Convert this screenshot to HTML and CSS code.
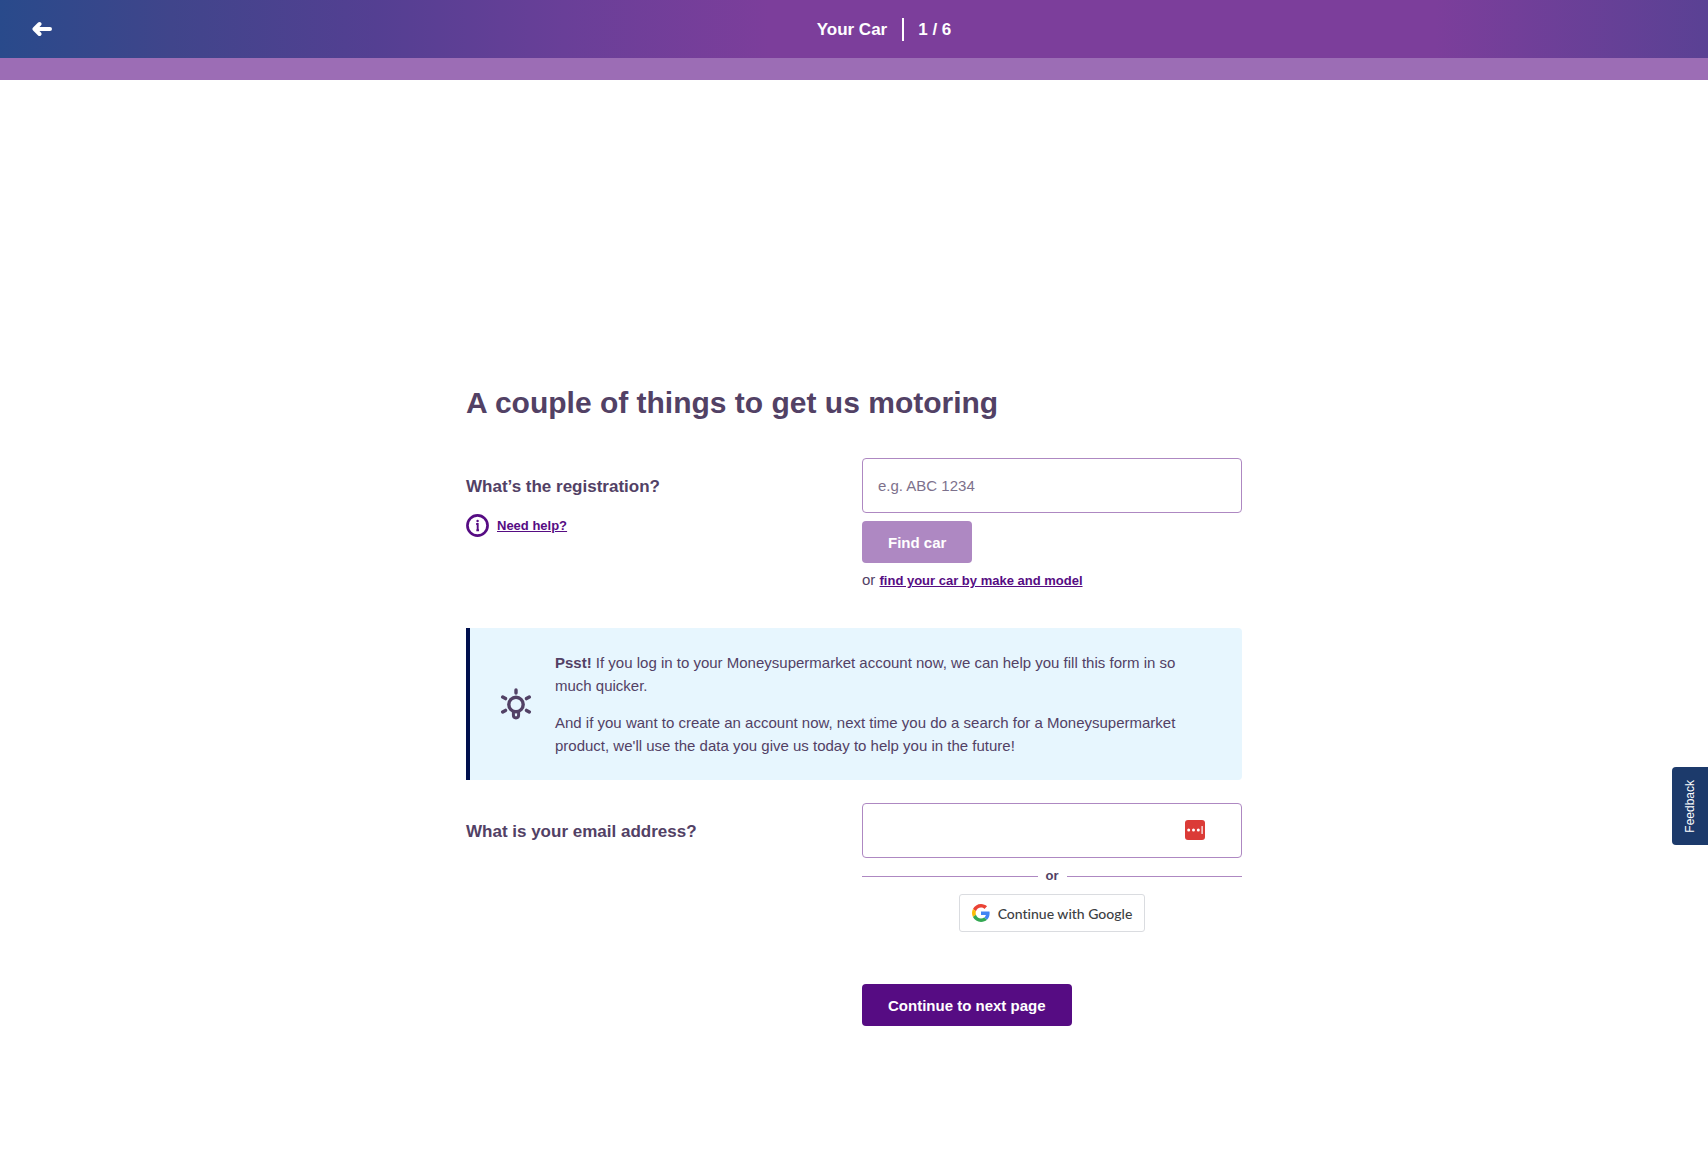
FILE: index.html
```html
<!DOCTYPE html>
<html lang="en">
<head>
<meta charset="utf-8">
<meta name="viewport" content="width=device-width, initial-scale=1">
<title>Your Car</title>
<link rel="stylesheet" href="styles.css">
</head>
<body>
<header class="header">
  <button class="back" type="button" aria-label="Back">
    <svg width="20" height="16" viewBox="0 0 20 16" fill="none" stroke="currentColor" stroke-width="4" stroke-linecap="round" stroke-linejoin="round"><path d="M7.500 3 2.500 8l5 5M3 8h15"/></svg>
  </button>
  <div class="step">
    <span class="step-name">Your Car</span>
    <span class="step-count">1 / 6</span>
  </div>
</header>
<div class="progress"></div>

<main class="main">
  <h1 class="title">A couple of things to get us motoring</h1>
  <form class="form">
    <div class="row">
      <div class="question">
        <label class="label" for="registration">What’s the registration?</label>
        <div class="help">
          <svg width="23" height="23" viewBox="0 0 24 24" fill="none" stroke="currentColor"><circle cx="12" cy="12" r="10.500" stroke-width="2.800"/><path d="M10.600 10.500h1.600V17.500M10.800 17h2.800" stroke-width="2"/><circle cx="12.100" cy="7.400" r="1.300" fill="currentColor" stroke="none"/></svg>
          <a class="link" href="#">Need help?</a>
        </div>
      </div>
      <div class="answer">
        <input class="input" id="registration" type="text" placeholder="e.g. ABC 1234">
        <button class="button button-muted" type="button">Find car</button>
        <p class="alternative">or <a class="link" href="#">find your car by make and model</a></p>
      </div>
    </div>

    <aside class="notice">
      <svg class="bulb" width="32" height="32" viewBox="0 0 32 32" fill="none" stroke="currentColor" stroke-width="3.400" stroke-linecap="round"><circle cx="16" cy="16.500" r="7.200"/><path d="M16 2v3M2.700 9l2.800 1.600M29.300 9l-2.800 1.600M2.700 24l2.800-1.600M29.300 24l-2.800-1.600"/><path d="M13.400 23.500v3.800a2.600 2.600 0 0 0 5.200 0v-3.800z" stroke-width="3"/></svg>
      <div class="notice-text">
        <p><strong>Psst!</strong> If you log in to your Moneysupermarket account now, we can help you fill this form in so much quicker.</p>
        <p>And if you want to create an account now, next time you do a search for a Moneysupermarket product, we'll use the data you give us today to help you in the future!</p>
      </div>
    </aside>

    <div class="row">
      <div class="question">
        <label class="label" for="email">What is your email address?</label>
      </div>
      <div class="answer">
        <div class="field">
          <input class="input" id="email" type="email">
          <svg class="vault" width="20" height="20" viewBox="0 0 20 20"><rect width="20" height="20" rx="3" fill="#db3b37"/><g fill="#fff"><circle cx="3.700" cy="10" r="1.500"/><circle cx="8.500" cy="10" r="1.500"/><circle cx="13.300" cy="10" r="1.500"/><rect x="16.500" y="6" width="1.200" height="8" rx=".6"/></g></svg>
        </div>
        <div class="divider">or</div>
        <button class="google" type="button">
          <svg width="18" height="18" viewBox="0 0 48 48"><path fill="#ea4335" d="M24 9.500c3.540 0 6.710 1.220 9.210 3.600l6.850-6.850C35.900 2.380 30.470 0 24 0 14.620 0 6.510 5.380 2.560 13.220l7.980 6.190C12.430 13.720 17.740 9.500 24 9.500z"/><path fill="#4285f4" d="M46.980 24.550c0-1.570-.15-3.090-.38-4.550H24v9.020h12.940c-.58 2.960-2.260 5.480-4.780 7.180l7.730 6c4.510-4.180 7.090-10.360 7.090-17.650z"/><path fill="#fbbc05" d="M10.530 28.590c-.48-1.450-.76-2.990-.76-4.590s.27-3.140.76-4.590l-7.980-6.190C.92 16.460 0 20.120 0 24c0 3.880.92 7.540 2.560 10.780l7.970-6.190z"/><path fill="#34a853" d="M24 48c6.480 0 11.930-2.130 15.890-5.810l-7.730-6c-2.150 1.450-4.920 2.300-8.160 2.300-6.260 0-11.570-4.220-13.470-9.910l-7.980 6.190C6.510 42.620 14.620 48 24 48z"/></svg>
          Continue with Google
        </button>
      </div>
    </div>

    <div class="row row-submit">
      <div class="answer">
        <button class="button" type="submit">Continue to next page</button>
      </div>
    </div>
  </form>
</main>

<button class="feedback" type="button">Feedback</button>
</body>
</html>
```
FILE: styles.css
```css
* {
  box-sizing: border-box;
}

body {
  margin: 0;
  background: #fff;
  color: #524165;
  font-family: "Liberation Sans", Arial, sans-serif;
  font-size: 15px;
  line-height: 23px;
}

button,
input {
  font: inherit;
}

h1,
p {
  margin: 0;
}

.header {
  display: flex;
  align-items: center;
  height: 58px;
  padding-left: 32px;
  background: linear-gradient(90deg, #294a8b 0%, #40458b 10%, #543f92 22%, #693f98 33%, #7c3e9b 45%, #7c3e9b 84%, #5a4194 100%);
  color: #fff;
}

.back {
  display: flex;
  width: 28px;
  padding: 0;
  border: 0;
  background: none;
  color: inherit;
}

.step {
  display: flex;
  flex: 1;
  justify-content: center;
  font-size: 17px;
  font-weight: 700;
}

.step-count {
  margin-left: 15px;
  padding-left: 14px;
  border-left: 2px solid #fff;
}

.progress {
  height: 22px;
  background: #9c6db5;
}

.main {
  max-width: 808px;
  margin: 0 auto;
  padding: 303px 16px 140px;
}

.title {
  margin-bottom: 35px;
  font-size: 30px;
  line-height: 40px;
}

.row {
  display: grid;
  grid-template-columns: 1fr 1fr;
  column-gap: 16px;
}

.row-submit {
  margin-top: 52px;
}

.row-submit .answer {
  grid-column: 2;
}

.question {
  padding-top: 17px;
}

.label {
  display: block;
  font-size: 17px;
  font-weight: 700;
  line-height: 24px;
}

.help {
  display: flex;
  align-items: center;
  gap: 8px;
  margin-top: 15px;
  color: #560c83;
}

.link {
  color: #560c83;
  font-size: 13px;
  font-weight: 700;
}

.answer {
  display: flex;
  flex-direction: column;
  align-items: flex-start;
}

.input {
  width: 100%;
  height: 55px;
  padding: 0 15px;
  border: 1px solid #ae88c2;
  border-radius: 4px;
  background: #fff;
  color: #524165;
}

.input::placeholder {
  color: #7d718c;
  opacity: 1;
}

.button {
  height: 42px;
  padding: 0 26px;
  border: 0;
  border-radius: 4px;
  background: #560c83;
  color: #fff;
  font-weight: 700;
}

.button-muted {
  margin-top: 8px;
  background: #ae88c2;
}

.alternative {
  margin-top: 5px;
}

.notice {
  display: flex;
  align-items: center;
  gap: 23px;
  margin: 36px 0 23px;
  padding: 23px 48px 23px 30px;
  border-left: 4px solid #00104d;
  border-radius: 0 4px 4px 0;
  background: #e7f6fe;
}

.bulb {
  flex: none;
}

.notice-text p + p {
  margin-top: 14px;
}

.field {
  position: relative;
  width: 100%;
}

.field .input {
  display: block;
}

.vault {
  position: absolute;
  top: 17px;
  right: 37px;
}

.divider {
  display: flex;
  align-items: center;
  gap: 8px;
  width: 100%;
  margin: 7px 0;
  font-size: 13px;
  font-weight: 700;
  line-height: 22px;
}

.divider::before,
.divider::after {
  content: "";
  flex: 1;
  height: 1px;
  background: #ae88c2;
}

.google {
  display: flex;
  align-items: center;
  align-self: center;
  gap: 8px;
  height: 38px;
  padding: 0 12px;
  border: 1px solid #dadce0;
  border-radius: 3px;
  background: #fff;
  color: #3c4043;
  font-family: Lato, sans-serif;
  font-size: 14px;
  font-weight: 500;
  font-variant-ligatures: none;
  white-space: nowrap;
}

.feedback {
  position: fixed;
  top: 767px;
  right: 0;
  width: 36px;
  height: 78px;
  padding: 0;
  border: 0;
  border-radius: 4px 0 0 4px;
  background: #1c3a6b;
  color: #fff;
  font-size: 12px;
  line-height: 36px;
  writing-mode: sideways-lr;
}
```
